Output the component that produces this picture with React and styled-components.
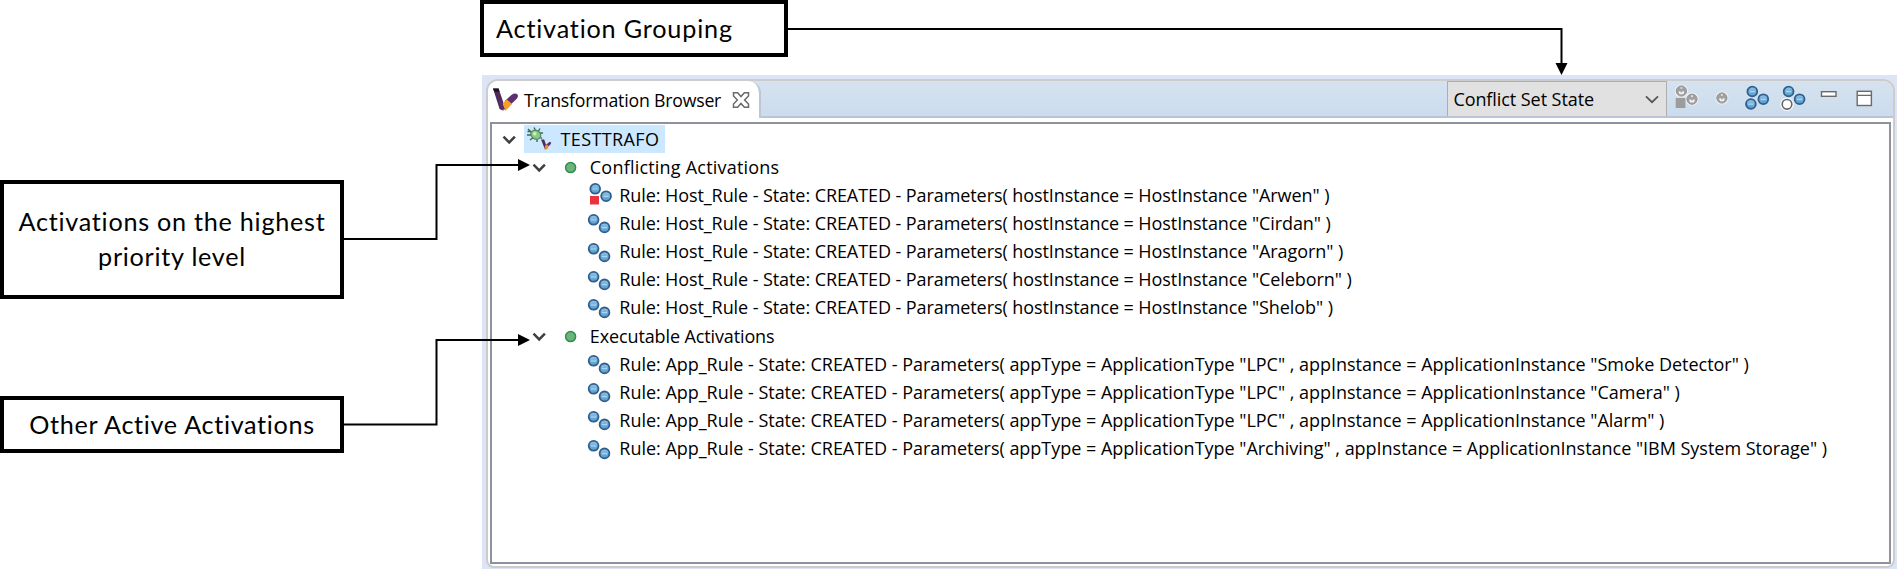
import React from 'react';
import styled, { createGlobalStyle } from 'styled-components';

const GlobalStyle = createGlobalStyle`
  * { box-sizing: border-box; }
  body { margin: 0; background: #fff; overflow: hidden; }
  svg { display: block; flex: none; }
`;

const Page = styled.main`
  position: relative;
  display: flex;
  width: 1897px;
  height: 569px;
  overflow: hidden;
  background: #fff;
  color: #000;
`;

const Notes = styled.aside`
  display: flex;
  flex-direction: column;
  align-items: flex-start;
  gap: 97px;
  flex: none;
  width: 480px;
  padding-top: 180px;
`;

const Callout = styled.div`
  display: flex;
  align-items: center;
  justify-content: ${(p) => (p.$start ? 'flex-start' : 'center')};
  flex: none;
  width: ${(p) => p.$width}px;
  height: ${(p) => p.$height}px;
  padding: 0 12px ${(p) => p.$lift || 0}px;
  border: 4px solid #000;
  background: #fff;
  font: 25.2px/35px Lato, 'Liberation Sans', sans-serif;
  letter-spacing: ${(p) => p.$tracking}px;
  text-align: center;
  white-space: pre;
`;

const Main = styled.section`
  display: flex;
  flex-direction: column;
  flex: 1;
  min-width: 0;
`;

const View = styled.div`
  flex: 1;
  display: flex;
  margin: 18px 0 0 2px;
  padding: 4px 2px 1px 4px;
  background: #dde4f5;
  font: 18px/24px 'Open Sans', 'Noto Sans', sans-serif;
  font-variant-ligatures: none;
`;

const Folder = styled.div`
  flex: 1;
  display: flex;
  flex-direction: column;
  border: 2px solid #cdcccd;
  border-radius: 12px 12px 8px 8px;
  background: #fff;
  overflow: hidden;
`;

const Header = styled.header`
  display: flex;
  align-items: flex-start;
  flex: none;
  height: 37px;
  border-bottom: 2px solid #b9c5d6;
  background: linear-gradient(#d5e2f0, #ccdcec);
`;

const Tab = styled.div`
  display: flex;
  align-items: center;
  width: 273px;
  height: 37px;
  padding-left: 5px;
  border-right: 2px solid #bcc6d4;
  border-radius: 0 12px 0 0;
  background: #fff;
`;

const TabTitle = styled.span`
  width: 208px;
  margin-left: 6px;
  font-size: 17.7px;
  letter-spacing: -0.2px;
  white-space: pre;
`;

const Toolbar = styled.div`
  display: flex;
  align-items: flex-start;
  margin-left: auto;
  padding-right: 10px;
`;

const Combo = styled.div`
  display: flex;
  align-items: center;
  justify-content: space-between;
  width: 220px;
  height: 35px;
  margin-right: 1.5px;
  padding: 0 6px 0 5px;
  border: 1.5px solid #adadad;
  border-bottom: 0;
  background: #e1e1e1;
  letter-spacing: -0.07px;
`;

const ToolIcon = styled.svg.attrs({ viewBox: '0 0 35.7 35' })`
  width: 35.7px;
  height: 35px;
`;

const Tree = styled.div`
  flex: 1;
  margin: 4px 2px 2px;
  padding-top: 1px;
  border: 2px solid #8d929c;
  background: #fff;
`;

const Row = styled.div`
  display: flex;
  align-items: center;
  height: 28.15px;
  padding-left: ${(p) => p.$indent}px;
`;

const Selection = styled.div`
  display: flex;
  align-items: center;
  width: 141px;
  height: 28px;
  margin-left: 7px;
  background: #cce8ff;
`;

const Label = styled.span`
  margin-left: ${(p) => p.$gap}px;
  padding-bottom: 1px;
  letter-spacing: ${(p) => p.$tracking}px;
  white-space: pre;
`;

const Connectors = styled.svg`
  position: absolute;
  inset: 0;
  pointer-events: none;
`;

const Ball = ({ x, y, r = 4.9 }) => (
  <g>
    <circle cx={x} cy={y} r={r} fill="url(#ball)" stroke="#2f5f8c" strokeWidth="1.8" />
    <path d={`M${x - 2.6} ${y + 0.2}h5.2`} stroke="#a9d6f2" strokeWidth="1.2" />
  </g>
);

const GrayBall = ({ x, y }) => (
  <g>
    <circle cx={x} cy={y} r="6.6" fill="#f3f4f5" opacity=".8" />
    <circle cx={x} cy={y} r="5.1" fill="#a0a0a0" stroke="#949494" strokeWidth="1" />
    <path d={`M${x - 2.6} ${y + 0.2}h1.800v1.200h1.600v-1.200h1.800v1.800l-1 1.200h-3.200l-1-1.200z`} fill="#f4f4f4" />
    <circle cx={x} cy={y - 3} r="1.1" fill="#dedede" />
  </g>
);

const Chevron = () => (
  <svg width="15" height="12" viewBox="0 0 15 12">
    <path d="M1.5 3.6 7.2 9.4 12.9 3.6" fill="none" stroke="#404040" strokeWidth="2.5" />
  </svg>
);

const Logo = () => (
  <svg width="25" height="23" viewBox="0 0 72 66">
    <path d="M0 1h16l10 29 10 32-8 3-9-5z" fill="#4f2a5c" />
    <path d="M0 1h16l3 10H4z" fill="#1c1220" />
    <path d="M34 37 54 19q10-6 17 0 3 7-4 13L48 50z" fill="#5c2f6e" />
    <path d="M27 46 39 32l16 14-18 19-10-3z" fill="#f5a02c" />
    <path d="M22 33 34 60l-9 3-9-24z" fill="#5b2f6b" />
  </svg>
);

const CloseIcon = () => (
  <svg width="18" height="18" viewBox="0 0 18 18">
    <path
      d="M1.5 1.7H5.6L9 5.6 12.4 1.7H16.5V5L12.6 9l3.9 4v3.300H12.4L9 12.400 5.600 16.300H1.500V13L5.400 9 1.500 5z"
      fill="#fff"
      stroke="#6a6a6a"
      strokeWidth="1.5"
    />
  </svg>
);

const TrafoIcon = () => (
  <svg width="28" height="26" viewBox="0 0 28 26">
    <g stroke="#3c6b4c" strokeWidth="1.4" fill="none">
      <path d="M4 3l4 4M3 9h5M6 14l4-3M10 1.500l2 4M16 2.500l-2 3.500M19 7h-4M18 12.500l-3-2M13 16v-4M3.500 5.500h4" />
    </g>
    <ellipse cx="11.800" cy="8.700" rx="5.200" ry="4.300" transform="rotate(30 11.800 8.700)" fill="#8cc88a" stroke="#4b8a5c" strokeWidth="1.100" />
    <circle cx="10.800" cy="7.700" r="1.700" fill="#d4efc4" />
    <path d="M17 13.500h3.200l3.200 9.500h-2.600z" fill="#4f2a5c" />
    <path d="M21.500 19 25.800 15.800q2.300.4.6 2.600L23 21.700z" fill="#5c2f6e" />
    <path d="M21 19.700l2-1.500 1.600 2-2.600 3.500-1.400-.3z" fill="#f0892c" />
  </svg>
);

const GroupDot = () => (
  <svg width="14" height="14" viewBox="0 0 14 14">
    <circle cx="6.6" cy="7.6" r="5" fill="#6cb47a" stroke="#2f8d50" strokeWidth="1.5" />
  </svg>
);

const ActivationIcon = ({ conflict }) =>
  conflict ? (
    <svg width="26" height="24" viewBox="0 0 26 24">
      <rect x="4" y="13" width="9" height="8.5" fill="#e8333f" />
      <Ball x={9.2} y={5.8} />
      <Ball x={20.1} y={13.2} />
    </svg>
  ) : (
    <svg width="26" height="24" viewBox="0 0 26 24">
      <Ball x={7.6} y={8.8} />
      <Ball x={18.5} y={16.4} />
    </svg>
  );

const hosts = ['Arwen', 'Cirdan', 'Aragorn', 'Celeborn', 'Shelob'];
const apps = [
  ['LPC', 'Smoke Detector'],
  ['LPC', 'Camera'],
  ['LPC', 'Alarm'],
  ['Archiving', 'IBM System Storage'],
];

const GroupRow = ({ tracking, children }) => (
  <Row $indent={39.5}>
    <Chevron />
    <Row as="span" $indent={17}>
      <GroupDot />
    </Row>
    <Label $gap={12.3} $tracking={tracking}>{children}</Label>
  </Row>
);

const RuleRow = ({ conflict, tracking, children }) => (
  <Row $indent={94}>
    <ActivationIcon conflict={conflict} />
    <Label $gap={7.3} $tracking={tracking}>{children}</Label>
  </Row>
);

export default function App() {
  return (
    <Page>
      <GlobalStyle />
      <Notes>
        <Callout $width={344} $height={119} $tracking={0.74} $lift={2}>
          {'Activations on the highest\npriority level'}
        </Callout>
        <Callout $width={344} $height={57} $tracking={0.68}>Other Active Activations</Callout>
      </Notes>
      <Main>
        <Callout $width={308} $height={57} $tracking={0.82} $start>Activation Grouping</Callout>
        <View>
          <Folder>
            <Header>
              <Tab>
                <Logo />
                <TabTitle>Transformation Browser</TabTitle>
                <CloseIcon />
              </Tab>
              <Toolbar>
                <Combo>
                  Conflict Set State
                  <svg width="16" height="12" viewBox="0 0 16 12">
                    <path d="M2 3.3 8 9.2 14 3.3" fill="none" stroke="#555" strokeWidth="1.7" />
                  </svg>
                </Combo>
                <ToolIcon>
                  <GrayBall x={12.4} y={10} />
                  <GrayBall x={23} y={18.2} />
                  <rect x="6.7" y="17" width="9.7" height="10" fill="#9c9c9c" />
                </ToolIcon>
                <ToolIcon>
                  <GrayBall x={16.9} y={17} />
                </ToolIcon>
                <ToolIcon>
                  <Ball x={12.3} y={10.5} />
                  <Ball x={23.3} y={18.2} />
                  <Ball x={10.9} y={23} />
                </ToolIcon>
                <ToolIcon>
                  <Ball x={12.6} y={10.5} />
                  <Ball x={23.6} y={18.2} />
                  <circle cx="11" cy="23.3" r="6.8" fill="#f5f8fb" />
                  <circle cx="11" cy="23.3" r="4.8" fill="#fff" stroke="#666" strokeWidth="1.6" />
                </ToolIcon>
                <ToolIcon>
                  <rect x="9.5" y="10.7" width="14.5" height="4.6" fill="#fff" stroke="#6a6a6a" strokeWidth="1.4" />
                </ToolIcon>
                <ToolIcon>
                  <rect x="10.2" y="10.3" width="14.2" height="14.2" fill="#fff" stroke="#6a6a6a" strokeWidth="1.4" />
                  <path d="M10.2 14.4h14.2" stroke="#6a6a6a" strokeWidth="1.4" />
                </ToolIcon>
              </Toolbar>
            </Header>
            <Tree>
              <Row $indent={10}>
                <Chevron />
                <Selection>
                  <TrafoIcon />
                  <Label $gap={8.5} $tracking={0.38}>TESTTRAFO</Label>
                </Selection>
              </Row>
              <GroupRow tracking={0.21}>Conflicting Activations</GroupRow>
              {hosts.map((host, i) => (
                <RuleRow key={host} conflict={i === 0} tracking={-0.08}>
                  {`Rule: Host_Rule - State: CREATED - Parameters( hostInstance = HostInstance "${host}" )`}
                </RuleRow>
              ))}
              <GroupRow tracking={-0.12}>Executable Activations</GroupRow>
              {apps.map(([type, name]) => (
                <RuleRow key={name} tracking={-0.02}>
                  {`Rule: App_Rule - State: CREATED - Parameters( appType = ApplicationType "${type}" , appInstance = ApplicationInstance "${name}" )`}
                </RuleRow>
              ))}
            </Tree>
          </Folder>
        </View>
      </Main>
      <Connectors width="1897" height="569" viewBox="0 0 1897 569">
        <defs>
          <linearGradient id="ball" x1="0" y1="0" x2="0" y2="1">
            <stop offset="0" stopColor="#94c4e6" />
            <stop offset="1" stopColor="#5599cb" />
          </linearGradient>
        </defs>
        <g fill="none" stroke="#000" strokeWidth="2">
          <path d="M788 29H1561.5V64" />
          <path d="M344 239H436.5V165H519" />
          <path d="M344 424.5H436.5V340H519" />
        </g>
        <path d="M1555.5 63h12l-6 12zM518 159v12l12-6zM518 334v12l12-6z" />
      </Connectors>
    </Page>
  );
}
